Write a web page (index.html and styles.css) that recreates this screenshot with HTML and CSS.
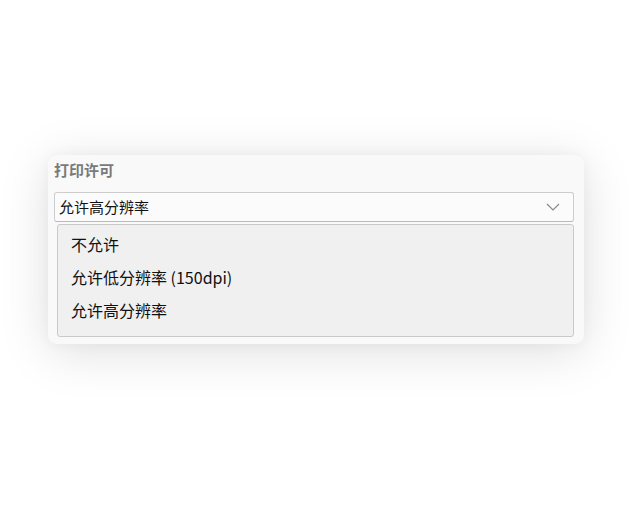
FILE: index.html
```html
<!DOCTYPE html>
<html lang="zh-CN">
<head>
<meta charset="utf-8">
<title>打印许可</title>
<link rel="stylesheet" href="styles.css">
</head>
<body>
<div class="card">
  <div class="label">打印许可</div>
  <div class="select">
    <span class="value">允许高分辨率</span>
    <svg class="chev" width="14" height="8" viewBox="0 0 14 8"><path d="M1 1 L7 7 L13 1" fill="none" stroke="#8a8a8a" stroke-width="1.2"/></svg>
  </div>
  <ul class="list">
    <li>不允许</li>
    <li>允许低分辨率 (150dpi)</li>
    <li>允许高分辨率</li>
  </ul>
</div>
</body>
</html>
```
FILE: styles.css
```css
html {
  background: #ffffff;
}
body {
  margin: 0;
  min-height: 532px;
  box-sizing: border-box;
  padding: 155px 50px 0 48px;
  font-family: "Noto Sans CJK SC", "Noto Sans", sans-serif;
  color: #111;
}
.card {
  width: 536px;
  box-sizing: border-box;
  background: #f9f9f9;
  border-radius: 9px;
  padding: 5px 10px 7px 6px;
  box-shadow: 0 8px 50px rgba(0, 0, 0, 0.13), 0 0 14px rgba(0, 0, 0, 0.04);
}
.label {
  font-size: 15px;
  font-weight: bold;
  color: #7a7a7a;
  line-height: 20px;
  margin-bottom: 12px;
}
.select {
  height: 30px;
  box-sizing: border-box;
  border: 1px solid #cdcdcd;
  border-bottom: 1px solid #ef96e2;
  border-radius: 3px;
  background: #fbfbfb;
  display: flex;
  align-items: center;
  justify-content: space-between;
  padding: 0 13px 0 4px;
}
.value {
  font-size: 15px;
  line-height: 20px;
  color: #111;
}
.chev {
  display: block;
}
.list {
  list-style: none;
  margin: 2px 0 0 3px;
  padding: 3px 0 9px 0;
  background: #f0f0f0;
  border: 1px solid #c9c9c9;
  border-radius: 3px;
}
.list li {
  height: 33px;
  line-height: 33px;
  font-size: 16px;
  padding-left: 13px;
  color: #111;
}
```
